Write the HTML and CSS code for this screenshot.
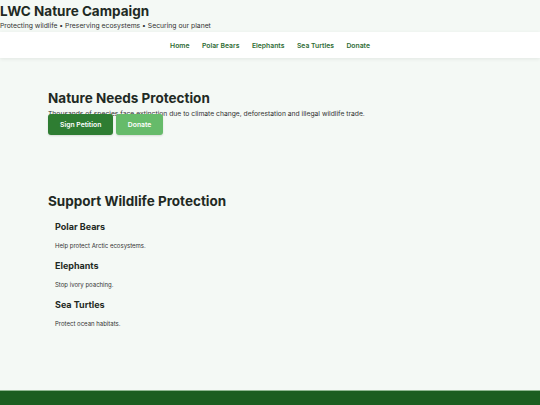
FILE: index.html
```html
<!DOCTYPE html>
<html lang="en">
<head>
<meta charset="utf-8">
<title>LWC Nature Campaign</title>
<link rel="stylesheet" href="styles.css">
</head>
<body>
  <header class="site-header">
    <h1 class="brand">LWC Nature Campaign</h1>
    <p class="tagline">Protecting wildlife • Preserving ecosystems • Securing our planet</p>
  </header>
  <nav class="main-nav">
    <a href="#">Home</a>
    <a href="#">Polar Bears</a>
    <a href="#">Elephants</a>
    <a href="#">Sea Turtles</a>
    <a href="#">Donate</a>
  </nav>
  <main>
    <section class="hero">
      <h2 class="hero-title">Nature Needs Protection</h2>
      <p class="hero-text">Thousands of species face extinction due to climate change, deforestation and illegal wildlife trade.</p>
      <div class="hero-actions">
        <a class="btn btn-primary" href="#">Sign Petition</a>
        <a class="btn btn-secondary" href="#">Donate</a>
      </div>
    </section>
    <section class="causes">
      <h2 class="section-title">Support Wildlife Protection</h2>
      <div class="cause">
        <h3>Polar Bears</h3>
        <p>Help protect Arctic ecosystems.</p>
      </div>
      <div class="cause">
        <h3>Elephants</h3>
        <p>Stop ivory poaching.</p>
      </div>
      <div class="cause">
        <h3>Sea Turtles</h3>
        <p>Protect ocean habitats.</p>
      </div>
    </section>
  </main>
  <footer class="site-footer"></footer>
</body>
</html>
```

FILE: styles.css
```css
* { box-sizing: border-box; }

html, body {
  margin: 0;
  padding: 0;
  height: 100%;
}

body {
  background: #f4f9f5;
  color: #1f2a24;
  font-family: Inter, "Noto Sans", sans-serif;
  display: flex;
  flex-direction: column;
}

.site-header {
  padding: 3px 0 0;
  height: 32px;
}

.brand {
  margin: 0;
  font-size: 13.5px;
  line-height: 16px;
  font-weight: 700;
}

.tagline {
  margin: 2px 0 0;
  font-size: 6.8px;
  line-height: 9px;
  color: #333333;
}

.main-nav {
  background: #ffffff;
  height: 26px;
  display: flex;
  justify-content: center;
  align-items: center;
  gap: 12.5px;
  box-shadow: 0 1px 4px rgba(0, 0, 0, 0.08);
  position: relative;
}

.main-nav a {
  color: #2e6b34;
  text-decoration: none;
  font-size: 6.8px;
  font-weight: 600;
}

main {
  flex: 1;
}

.hero {
  padding: 31px 48px 0;
}

.hero-title,
.section-title {
  margin: 0;
  font-size: 13.5px;
  line-height: 18px;
  font-weight: 700;
  color: #1f2a24;
}

.hero-text {
  margin: 2px 0 0;
  font-size: 6.75px;
  line-height: 9px;
  color: #333333;
}

.hero-actions {
  display: flex;
  gap: 3px;
  margin-top: -4px;
}

.btn {
  display: inline-flex;
  align-items: center;
  justify-content: center;
  height: 21px;
  padding: 0 12px;
  border-radius: 3px;
  color: #ffffff;
  font-size: 6.8px;
  font-weight: 600;
  text-decoration: none;
  box-shadow: 0 1px 2px rgba(0, 0, 0, 0.12);
}

.btn-primary { background: #2e7d32; }
.btn-secondary { background: #66bb6a; padding: 0 11.5px; }

.causes {
  padding: 57px 48px 0;
}

.section-title {
  margin-bottom: 11px;
}

.cause {
  padding: 0 7px;
}

.cause h3 {
  margin: 0;
  font-size: 9px;
  line-height: 11px;
  font-weight: 700;
  color: #1f2a24;
}

.cause p {
  margin: 9.5px 0 10.5px;
  font-size: 6px;
  line-height: 8px;
  color: #333333;
}

.site-footer {
  height: 15px;
  background: #1b5e20;
  border-top: 1px solid #8fb891;
}
```
